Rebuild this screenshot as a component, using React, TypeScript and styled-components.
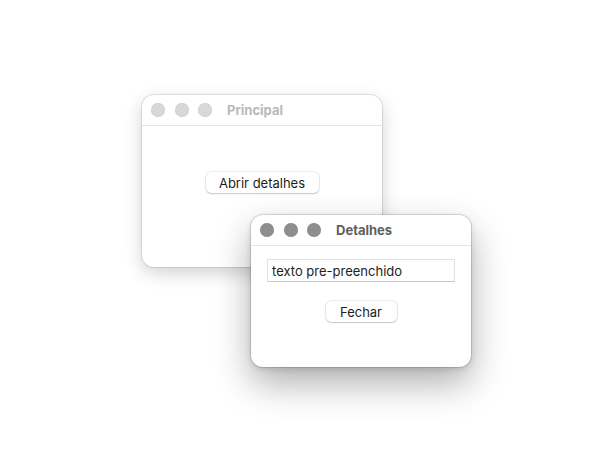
import React from 'react'
import styled, { createGlobalStyle } from 'styled-components'

const GlobalStyle = createGlobalStyle`
  html, body {
    margin: 0;
    padding: 0;
    background: #ffffff;
  }
  body {
    font-family: Inter, "Liberation Sans", Arial, sans-serif;
    -webkit-font-smoothing: antialiased;
  }
`

// the desktop is a free canvas, windows sit at their own place on it
const Desktop = styled.div`
  position: relative;
  width: 612px;
  height: 455px;
  overflow: hidden;
  background: #ffffff;
`

const Window = styled.div<{ $left: number; $top: number; $width: number; $height: number; $active?: boolean }>`
  position: absolute;
  left: ${({ $left }) => $left}px;
  top: ${({ $top }) => $top}px;
  width: ${({ $width }) => $width}px;
  height: ${({ $height }) => $height}px;
  display: flex;
  flex-direction: column;
  background: #ffffff;
  border-radius: 12px;
  overflow: hidden;
  box-shadow: ${({ $active }) =>
    $active
      ? '0 0 0 1px rgba(0,0,0,0.12), 0 16px 36px rgba(0,0,0,0.32), 0 2px 6px rgba(0,0,0,0.12)'
      : '0 0 0 1px rgba(0,0,0,0.1), 0 6px 18px rgba(0,0,0,0.18)'};
`

const TitleBar = styled.div`
  height: 31px;
  flex: none;
  display: flex;
  align-items: center;
  padding: 0 9px;
  border-bottom: 1px solid #e4e4e4;
  box-sizing: border-box;
`

const Lights = styled.div`
  display: flex;
  gap: 9.5px;
`

const Light = styled.span<{ $active?: boolean }>`
  width: 14px;
  height: 14px;
  border-radius: 50%;
  background: ${({ $active }) => ($active ? '#8e8e8e' : '#d8d8d8')};
  box-shadow: inset 0 0 0 0.5px rgba(0, 0, 0, 0.08);
`

const Title = styled.span<{ $active?: boolean }>`
  margin-left: 15px;
  font-size: 13px;
  font-weight: 700;
  color: ${({ $active }) => ($active ? '#5f5f5f' : '#b9b9b9')};
`

const Content = styled.div<{ $pad: string; $gap?: number }>`
  flex: 1;
  display: flex;
  flex-direction: column;
  align-items: center;
  padding: ${({ $pad }) => $pad};
  gap: ${({ $gap }) => $gap ?? 0}px;
`

const PushButton = styled.button<{ $width: number }>`
  width: ${({ $width }) => $width}px;
  height: 21px;
  padding: 0;
  border: none;
  border-radius: 5px;
  background: #ffffff;
  box-shadow: 0 0 0 0.5px rgba(0, 0, 0, 0.14), 0 1px 1.5px rgba(0, 0, 0, 0.16);
  font-family: inherit;
  font-size: 13px;
  color: #1d1d1d;
  display: flex;
  align-items: center;
  justify-content: center;
`

const TextField = styled.input`
  align-self: stretch;
  height: 23px;
  box-sizing: border-box;
  margin: 0;
  padding: 0 4px;
  border: 1px solid #e1e1e1;
  border-bottom-color: #c9c9c9;
  border-radius: 0;
  outline: none;
  background: #ffffff;
  font-family: inherit;
  font-size: 13px;
  color: #1d1d1d;
`

const TrafficLights: React.FC<{ active?: boolean }> = ({ active }) => (
  <Lights>
    <Light $active={active} />
    <Light $active={active} />
    <Light $active={active} />
  </Lights>
)

export default function App() {
  return (
    <>
      <GlobalStyle />
      <Desktop>
        <Window $left={142} $top={95} $width={240} $height={172}>
          <TitleBar>
            <TrafficLights />
            <Title>Principal</Title>
          </TitleBar>
          <Content $pad="46px 0 0">
            <PushButton $width={113}>Abrir detalhes</PushButton>
          </Content>
        </Window>

        <Window $left={251} $top={215} $width={220} $height={152} $active>
          <TitleBar>
            <TrafficLights active />
            <Title $active>Detalhes</Title>
          </TitleBar>
          <Content $pad="13px 16px 0" $gap={19}>
            <TextField defaultValue="texto pre-preenchido" readOnly />
            <PushButton $width={71}>Fechar</PushButton>
          </Content>
        </Window>
      </Desktop>
    </>
  )
}
